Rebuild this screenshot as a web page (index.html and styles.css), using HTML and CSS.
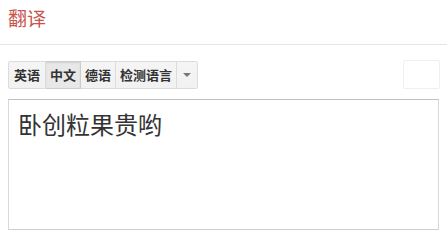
FILE: index.html
```html
<!DOCTYPE html>
<html lang="zh">
<head>
<meta charset="utf-8">
<link rel="stylesheet" href="styles.css">
</head>
<body>
<header class="header"><h1 class="title">翻译</h1></header>
<div class="toolbar">
  <div class="btn-group">
    <button class="btn">英语</button>
    <button class="btn active">中文</button>
    <button class="btn">德语</button>
    <button class="btn">检测语言</button>
    <button class="btn caret-btn"><span class="caret"></span></button>
  </div>
  <div class="side-box"></div>
</div>
<div class="source">卧创粒果贵哟</div>
</body>
</html>
```
FILE: styles.css
```css
html, body { margin: 0; padding: 0; background: #fff; }
body { font-family: "Noto Sans CJK SC", "Liberation Sans", sans-serif; width: 447px; height: 239px; overflow: hidden; }
.header { height: 45px; border-bottom: 1px solid #e5e5e5; padding: 8px 8px 0 8px; box-sizing: border-box; }
.title { margin: 0; font-size: 19px; font-weight: normal; color: #c9544c; line-height: 20px; }
.toolbar { display: flex; justify-content: space-between; align-items: center; margin: 15px 7px 0 8px; height: 29px; }
.btn-group { display: flex; height: 28px; }
.btn { font-family: "Noto Sans CJK SC", sans-serif; font-weight: bold; font-size: 13px; color: #333; padding: 0 4px; height: 28px; border: 1px solid #dcdcdc; border-left: none; background: linear-gradient(#f5f5f5, #f1f1f1); margin: 0; line-height: 26px; }
.btn:first-child { border-left: 1px solid #dcdcdc; border-radius: 2px 0 0 2px; padding: 0 5px; }
.btn:last-child { border-radius: 0 2px 2px 0; }
.btn.active { background: #e8e8e8; box-shadow: inset 0 1px 2px rgba(0,0,0,0.1); border-color: #ccc; }
.caret-btn { width: 21px; padding: 0; display: flex; align-items: center; justify-content: center; }
.caret { width: 0; height: 0; border-left: 4px solid transparent; border-right: 4px solid transparent; border-top: 4px solid #777; }
.side-box { width: 35px; height: 27px; border: 1px solid #f0f0f0; border-radius: 2px; }
.source { margin: 10px 8px 0 8px; height: 131px; box-sizing: border-box; border: 1px solid #d9d9d9; border-top-color: #c0c0c0; border-bottom-color: #cfcfcf; padding: 8px 9px; font-size: 24px; line-height: 32px; color: #333; }
```
